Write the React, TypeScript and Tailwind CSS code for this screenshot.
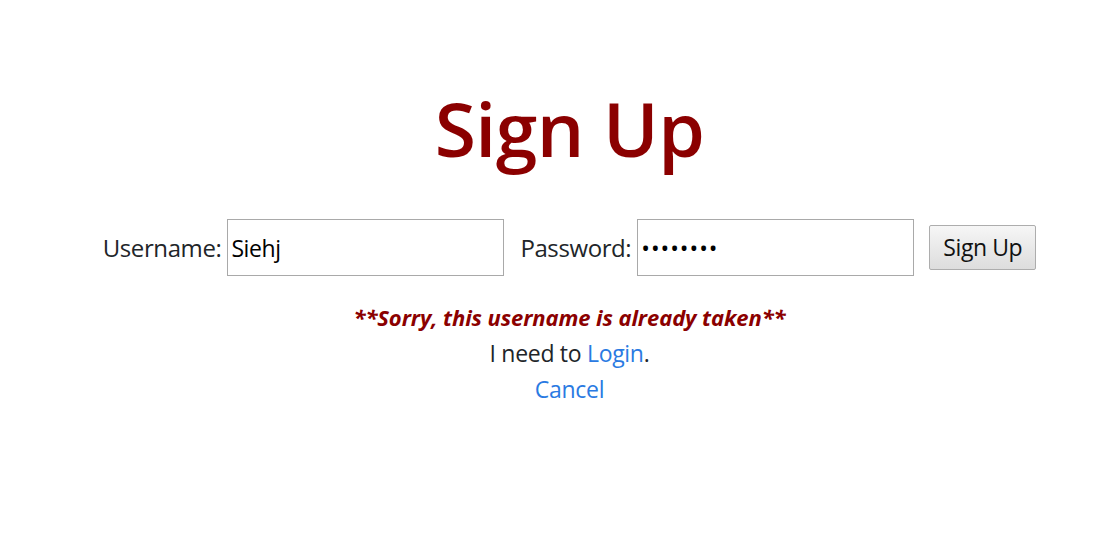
export default function App() {
  return (
    <div
      className="w-[1108px] h-[551px] bg-white pl-[31px] text-[#212529]"
      style={{ fontFamily: '"Open Sans", "Noto Sans", sans-serif' }}
    >
      <div className="flex flex-col items-center">
        <h1 className="mt-[78px] text-[75px] leading-[100px] font-semibold text-[#8b0000] tracking-[-0.5px]">Sign Up</h1>
        <form className="mt-[41px] flex items-center text-[24px] tracking-[-0.4px]">
          <label className="mr-[6px]">Username:</label>
          <input
            type="text"
            defaultValue="Siehj"
            className="w-[277px] h-[57px] border border-[#a9a9a9] px-[3px] text-[23px] text-black outline-none"
          />
          <label className="ml-[16px] mr-[6px]">Password:</label>
          <input
            type="password"
            defaultValue="password"
            className="w-[277px] h-[57px] border border-[#a9a9a9] px-[3px] text-[23px] text-black outline-none tracking-[1px]"
          />
          <button
            type="button"
            className="ml-[15px] w-[107px] h-[45px] border border-[#adadad] rounded-[2px] bg-gradient-to-b from-[#f6f6f6] to-[#dddddd] text-[23px] text-[#111]"
          >
            Sign Up
          </button>
        </form>
        <p className="mt-[23px] text-[22px] leading-[36px] font-bold italic text-[#8b0000] tracking-[-0.1px]">
          **Sorry, this username is already taken**
        </p>
        <p className="text-[23px] leading-[36px] tracking-[-0.3px]">
          I need to <a className="text-[#2a7ae2]">Login</a>.
        </p>
        <a className="text-[23px] leading-[36px] text-[#2a7ae2] tracking-[-0.3px]">Cancel</a>
      </div>
    </div>
  );
}
